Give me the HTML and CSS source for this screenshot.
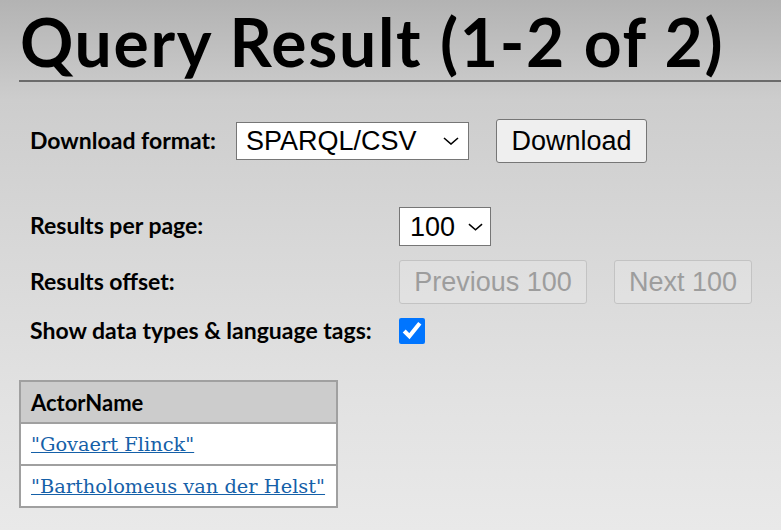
FILE: index.html
```html
<!DOCTYPE html>
<html lang="en">
<head>
<meta charset="utf-8">
<title>Query Result</title>
<link rel="stylesheet" href="styles.css">
</head>
<body>
<h1 class="title">Query Result (1-2 of 2)</h1>
<form class="download">
  <label class="lbl" for="fmt">Download format:</label>
  <span class="selwrap selwrap-format">
    <select id="fmt" class="sel sel-format"><option>SPARQL/CSV</option></select>
    <svg class="chev" viewBox="0 0 16 8" width="16" height="8" aria-hidden="true"><path d="M1 1 L8 7 L15 1" fill="none" stroke="#000" stroke-width="1.6"/></svg>
  </span>
  <button type="button" class="btn btn-download">Download</button>
</form>
<div class="opts">
  <div class="lbl">Results per page:</div>
  <div class="ctl">
    <span class="selwrap selwrap-page">
      <select class="sel sel-page"><option>100</option></select>
      <svg class="chev" viewBox="0 0 16 8" width="15" height="8" aria-hidden="true"><path d="M1 1 L8 7 L15 1" fill="none" stroke="#000" stroke-width="1.6"/></svg>
    </span>
  </div>
  <div class="lbl">Results offset:</div>
  <div class="ctl pager">
    <button type="button" class="btn btn-prev" disabled>Previous 100</button>
    <button type="button" class="btn btn-next" disabled>Next 100</button>
  </div>
  <div class="lbl">Show data types &amp; language tags:</div>
  <div class="ctl"><input type="checkbox" class="chk" checked></div>
</div>
<table class="results">
  <thead><tr><th>ActorName</th></tr></thead>
  <tbody>
    <tr><td><a href="#">"Govaert Flinck"</a></td></tr>
    <tr><td><a href="#">"Bartholomeus van der Helst"</a></td></tr>
  </tbody>
</table>
</body>
</html>
```
FILE: styles.css
```css
html {
  background-color: #e9e9e9;
  background-image: linear-gradient(#b3b3b3 0px, #cdcdcd 100px, #d8d8d8 250px, #e2e2e2 400px, #e9e9e9 530px);
  background-repeat: no-repeat;
  min-height: 100%;
}
body {
  margin: 0;
  padding: 0 0 0 19px;
  font-family: Lato, "DejaVu Sans", sans-serif;
  color: #000;
}
.title {
  margin: 0;
  padding: 9px 0 5px 1px;
  font-family: Lato, "DejaVu Sans", sans-serif;
  font-weight: bold;
  font-size: 66px;
  letter-spacing: 1.7px;
  line-height: 66px;
  border-bottom: 2px solid #6b6b6b;
}
.lbl {
  font-weight: bold;
  font-size: 23px;
  line-height: 22px;
  padding-left: 11px;
  padding-bottom: 3px;
}
.download {
  display: flex;
  align-items: center;
  margin: 37px 0 0 0;
}
.download .lbl { margin-right: 20px; }
.selwrap {
  position: relative;
  display: inline-block;
  vertical-align: middle;
}
.selwrap-format { margin-right: 27px; }
.chev {
  position: absolute;
  top: 50%;
  margin-top: -4px;
  pointer-events: none;
}
.selwrap-format .chev { right: 10px; }
.selwrap-page .chev { right: 8px; }
.sel {
  -webkit-appearance: none;
  appearance: none;
  display: block;
  font-family: "Liberation Sans", Arial, sans-serif;
  font-size: 27px;
  color: #000;
  background: #fff;
  border: 1px solid #767676;
  border-radius: 0;
  padding: 0 0 0 9px;
  margin: 0;
  box-sizing: border-box;
}
.sel-format { width: 233px; height: 38px; }
.sel-page { width: 92px; height: 39px; padding-left: 10px; }
.btn {
  font-family: "Liberation Sans", Arial, sans-serif;
  font-size: 27px;
  color: #000;
  background: #efefef;
  border: 1px solid #767676;
  border-radius: 3px;
  height: 44px;
  padding: 0;
  margin: 0;
  box-sizing: border-box;
}
.btn-download { width: 151px; }
.btn:disabled {
  color: #9d9d9d;
  background: rgba(239, 239, 239, 0.3);
  border-color: #c3c3c3;
}
.btn-prev { width: 188px; }
.btn-next { width: 138px; }
.opts {
  display: grid;
  grid-template-columns: 380px auto;
  align-items: center;
  row-gap: 14px;
  margin-top: 44px;
}
.pager { display: flex; gap: 27px; }
.chk {
  width: 26px;
  height: 26px;
  margin: 0;
  accent-color: #0075ff;
  display: block;
}
.results {
  margin-top: 36px;
  border-collapse: collapse;
  border: 2px solid #a0a0a0;
}
.results th {
  background: #cccccc;
  text-align: left;
  font-family: Lato, "DejaVu Sans", sans-serif;
  font-weight: bold;
  font-size: 22px;
  height: 40px;
  padding: 0 10px;
  border-bottom: 2px solid #a0a0a0;
}
.results td {
  background: #fff;
  font-family: "DejaVu Serif", Georgia, serif;
  font-size: 19.4px;
  height: 40px;
  padding: 0 11px 0 10px;
  border-top: 2px solid #a0a0a0;
}
.results a { color: #1560a8; }
```
